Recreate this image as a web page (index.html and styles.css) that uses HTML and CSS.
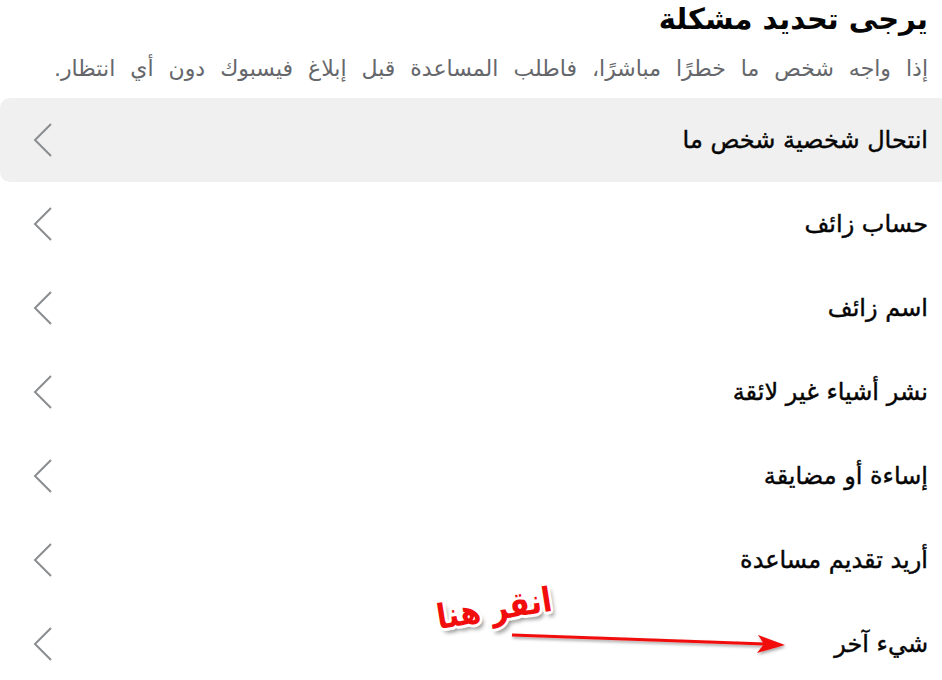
FILE: index.html
```html
<!DOCTYPE html>
<html lang="ar" dir="rtl">
<head>
<meta charset="utf-8">
<link rel="stylesheet" href="styles.css">
</head>
<body>
<div class="page">
  <h1 class="title">يرجى تحديد مشكلة</h1>
  <p class="subtitle">إذا واجه شخص ما خطرًا مباشرًا، فاطلب المساعدة قبل إبلاغ فيسبوك دون أي انتظار.</p>
  <ul class="list">
    <li class="row active"><span class="label">انتحال شخصية شخص ما</span><svg class="chev" viewBox="0 0 20 34"><path d="M18 1 L2 17 L18 33" fill="none" stroke="#8a8d91" stroke-width="2"/></svg></li>
    <li class="row"><span class="label">حساب زائف</span><svg class="chev" viewBox="0 0 20 34"><path d="M18 1 L2 17 L18 33" fill="none" stroke="#8a8d91" stroke-width="2"/></svg></li>
    <li class="row"><span class="label">اسم زائف</span><svg class="chev" viewBox="0 0 20 34"><path d="M18 1 L2 17 L18 33" fill="none" stroke="#8a8d91" stroke-width="2"/></svg></li>
    <li class="row"><span class="label">نشر أشياء غير لائقة</span><svg class="chev" viewBox="0 0 20 34"><path d="M18 1 L2 17 L18 33" fill="none" stroke="#8a8d91" stroke-width="2"/></svg></li>
    <li class="row"><span class="label">إساءة أو مضايقة</span><svg class="chev" viewBox="0 0 20 34"><path d="M18 1 L2 17 L18 33" fill="none" stroke="#8a8d91" stroke-width="2"/></svg></li>
    <li class="row"><span class="label">أريد تقديم مساعدة</span><svg class="chev" viewBox="0 0 20 34"><path d="M18 1 L2 17 L18 33" fill="none" stroke="#8a8d91" stroke-width="2"/></svg></li>
    <li class="row"><span class="label">شيء آخر</span><svg class="chev" viewBox="0 0 20 34"><path d="M18 1 L2 17 L18 33" fill="none" stroke="#8a8d91" stroke-width="2"/></svg>
      <div class="note">انقر هنا</div>
      <svg class="arrow" viewBox="0 0 280 30"><defs><filter id="sh" x="-5%" y="-50%" width="110%" height="200%"><feDropShadow dx="1" dy="2" stdDeviation="1.5" flood-color="#000" flood-opacity="0.35"/></filter></defs><g filter="url(#sh)"><path d="M2 6 L255 15" stroke="#f20d0d" stroke-width="3" fill="none"/><path d="M275 16 L248 6 L254 15 L247 24 Z" fill="#f20d0d"/></g></svg>
    </li>
  </ul>
</div>
</body>
</html>
```
FILE: styles.css
```css
html, body {
  margin: 0;
  padding: 0;
  background: #ffffff;
}
body {
  font-family: "DejaVu Sans", "Noto Sans", sans-serif;
  color: #050505;
  width: 942px;
  overflow: hidden;
}
.page {
  direction: rtl;
}
.title {
  margin: 0;
  padding: 0 14px 0 0;
  font-size: 29px;
  font-weight: 700;
  line-height: 38px;
  height: 38px;
}
.subtitle {
  margin: 14px 0 0 0;
  padding: 0 14px 0 0;
  font-size: 22px;
  line-height: 34px;
  word-spacing: 8px;
  color: #65676b;
  white-space: nowrap;
}
.list {
  list-style: none;
  margin: 12px 0 0 0;
  padding: 0;
}
.row {
  position: relative;
  display: flex;
  align-items: center;
  justify-content: space-between;
  height: 84px;
  padding: 0 14px 0 33px;
  border-radius: 10px 0 0 10px;
}
.row.active {
  background: #f0f0f0;
}
.label {
  font-size: 24px;
  font-weight: 400;
  -webkit-text-stroke: 0.4px #050505;
}
.chev {
  width: 20px;
  height: 34px;
}
.note {
  position: absolute;
  left: 428px;
  top: -14px;
  font-size: 34px;
  font-weight: 700;
  color: #f20d0d;
  transform: rotate(-9deg) scaleX(0.88);
  transform-origin: center;
  text-shadow: -2px -2px 0 #fff, 2px -2px 0 #fff, -2px 2px 0 #fff, 2px 2px 0 #fff, 0 3px 0 #fff, 0 -3px 0 #fff, 3px 0 0 #fff, -3px 0 0 #fff, 3px 5px 5px rgba(0,0,0,0.45);
}
.arrow {
  position: absolute;
  left: 510px;
  top: 27px;
  width: 280px;
  height: 30px;
}
```
